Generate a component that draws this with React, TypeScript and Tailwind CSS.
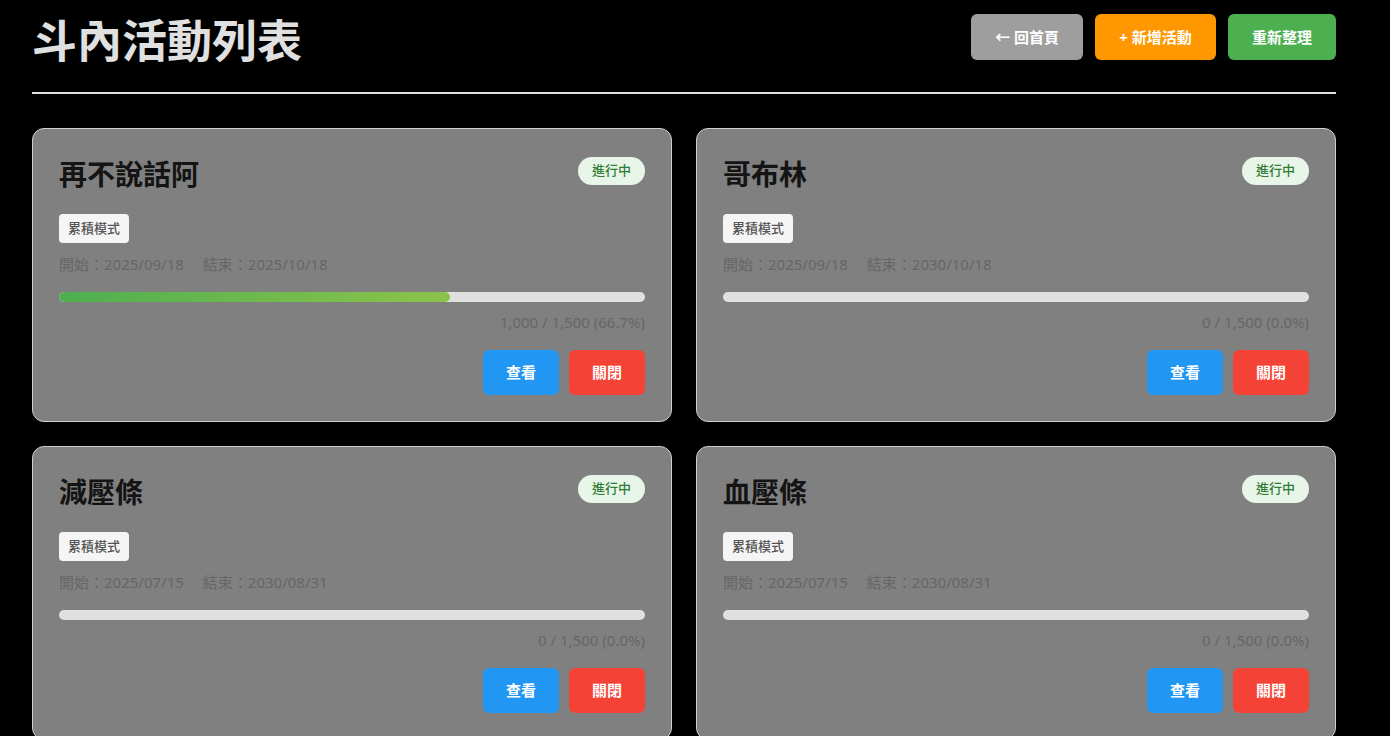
const FONT = { fontFamily: '"Noto Sans", "Noto Sans CJK TC", sans-serif' };

type Activity = {
  name: string;
  start: string;
  end: string;
  current: number;
  target: number;
};

const activities: Activity[] = [
  { name: "再不說話阿", start: "2025/09/18", end: "2025/10/18", current: 1000, target: 1500 },
  { name: "哥布林", start: "2025/09/18", end: "2030/10/18", current: 0, target: 1500 },
  { name: "減壓條", start: "2025/07/15", end: "2030/08/31", current: 0, target: 1500 },
  { name: "血壓條", start: "2025/07/15", end: "2030/08/31", current: 0, target: 1500 },
];

function ActivityCard({ a }: { a: Activity }) {
  const pct = (a.current / a.target) * 100;
  return (
    <div className="rounded-xl border border-[#cfcfcf] bg-[#808080] p-[26px]">
      <div className="flex items-start justify-between">
        <h2 className="text-[28px] font-bold leading-[39px] text-[#141414]">{a.name}</h2>
        <span className="mt-[2px] flex h-7 items-center rounded-full bg-[#e8f5e9] px-[14px] text-[13px] font-medium text-[#2e7d32]">
          進行中
        </span>
      </div>

      <div className="mt-5 flex">
        <span className="flex h-[29px] items-center rounded bg-[#f5f5f5] px-[9px] text-[13px] font-medium text-[#555]">
          累積模式
        </span>
      </div>

      <div className="mt-[10px] flex gap-[19px] text-[15px] leading-[22px] text-[#666]">
        <span>開始：{a.start}</span>
        <span>結束：{a.end}</span>
      </div>

      <div className="mt-[17px] h-[10px] w-full overflow-hidden rounded-full bg-[#e0e0e0]">
        <div
          className="h-full rounded-full bg-gradient-to-r from-[#4caf50] to-[#8bc34a]"
          style={{ width: `${pct}%` }}
        />
      </div>

      <p className="mt-[9px] text-right text-[15px] leading-[22px] text-[#666]">
        {a.current.toLocaleString("en-US")} / {a.target.toLocaleString("en-US")} ({pct.toFixed(1)}%)
      </p>

      <div className="mt-[17px] flex justify-end gap-[10px]">
        <button className="h-[45px] w-[76px] rounded-md bg-[#2196f3] text-[15px] font-bold text-white">
          查看
        </button>
        <button className="h-[45px] w-[76px] rounded-md bg-[#f44336] text-[15px] font-bold text-white">
          關閉
        </button>
      </div>
    </div>
  );
}

export default function App() {
  return (
    <div className="min-h-screen bg-black" style={FONT}>
      <div className="mx-8 max-w-[1304px]">
        <header className="flex items-start justify-between border-b-2 border-[#e0e0e0] pb-6 pt-[14px]">
          <h1 className="text-[45px] font-bold leading-[54px] text-[#e0e0e0]">斗內活動列表</h1>
          <div className="flex gap-3">
            <button className="h-[46px] w-[112px] rounded-md bg-[#9e9e9e] text-[15px] font-bold text-white">
              ← 回首頁
            </button>
            <button className="h-[46px] w-[121px] rounded-md bg-[#ff9800] text-[15px] font-bold text-white">
              + 新增活動
            </button>
            <button className="h-[46px] w-[108px] rounded-md bg-[#4caf50] text-[15px] font-bold text-white">
              重新整理
            </button>
          </div>
        </header>

        <div className="mt-[34px] grid grid-cols-2 gap-6">
          {activities.map((a) => (
            <ActivityCard key={a.name} a={a} />
          ))}
        </div>
      </div>
    </div>
  );
}
